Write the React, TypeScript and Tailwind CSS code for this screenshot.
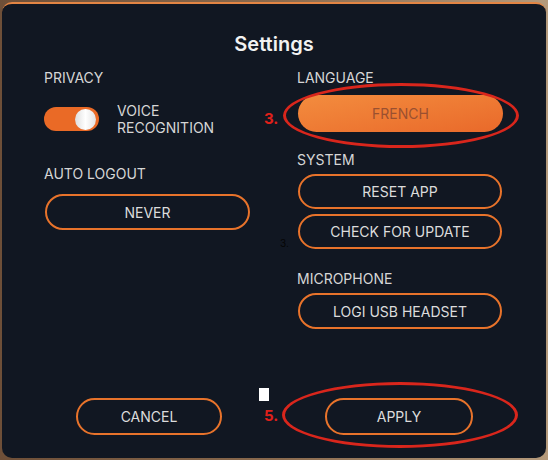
const Pill = ({label, className = ""}: {label: string; className?: string}) => (
    <button
        type="button"
        className={"flex items-center justify-center rounded-full border-2 border-[#e8732b] text-[14px] text-[#dcdcdc] " + className}>
        {label}
    </button>
);

const Label = ({children, className = ""}: {children: string; className?: string}) => (
    <div className={"h-5 text-[14px] leading-5 text-[#d6d6d6] " + className}>{children}</div>
);

const App = () => {
    return (
        <div className="h-[460px] w-[548px] bg-gradient-to-r from-[#6e4f38] via-[#8a6a4e] to-[#b49a7c] p-[2px]"
             style={{fontFamily: "Inter, 'Noto Sans', sans-serif"}}>
            <div className="relative flex h-full flex-col rounded-[10px] border-t-2 border-[#e38544] bg-[#111722]">
                <h1 className="pt-[26px] text-center text-[20px] font-semibold leading-7 text-[#f2f2f2]">
                    Settings
                </h1>

                <div className="mt-[10px] flex pl-[42px]">
                    {/* left column */}
                    <div className="flex w-[206px] flex-col">
                        <Label>PRIVACY</Label>
                        <div className="mt-[14px] flex h-[34px] items-center">
                            <div className="flex h-6 w-[55px] items-center justify-end rounded-full bg-[#ea6a26] pr-[3px]">
                                <div className="h-[21px] w-[21px] rounded-full bg-gradient-to-r from-[#dedede] via-white to-[#e2e2e2]"/>
                            </div>
                            <div className="ml-[18px] text-[14px] leading-[17px] text-[#d6d6d6]">
                                VOICE<br/>RECOGNITION
                            </div>
                        </div>
                        <Label className="mt-[28px]">AUTO LOGOUT</Label>
                        <Pill label="NEVER" className="mt-[10px] ml-[1px] h-9 w-[205px]"/>
                    </div>

                    {/* right column */}
                    <div className="ml-[47px] flex w-[206px] flex-col">
                        <Label>LANGUAGE</Label>
                        <button
                            type="button"
                            className="mt-[7px] ml-[1px] flex h-[37px] w-[205px] items-center justify-center rounded-full bg-gradient-to-br from-[#f38c3e] to-[#e9692a] text-[14px] text-[#9a5030]">
                            FRENCH
                        </button>
                        <Label className="mt-[18px]">SYSTEM</Label>
                        <Pill label="RESET APP" className="mt-[4px] ml-[1px] h-[35px] w-[204px]"/>
                        <Pill label="CHECK FOR UPDATE" className="mt-[5px] ml-[1px] h-[35px] w-[204px]"/>
                        <Label className="mt-[20px]">MICROPHONE</Label>
                        <Pill label="LOGI USB HEADSET" className="mt-[4px] ml-[1px] h-9 w-[204px]"/>
                    </div>
                </div>

                <div className="mt-auto flex pb-[23px] pl-[74px]">
                    <Pill label="CANCEL" className="h-[37px] w-[146px]"/>
                    <Pill label="APPLY" className="ml-[103px] h-[37px] w-[148px]"/>
                </div>

                {/* annotations */}
                <div className="absolute left-[281px] top-[79px] h-[65px] w-[236px] rounded-[50%] border-[3px] border-[#d9261c] blur-[0.4px]"/>
                <div className="absolute left-[280px] top-[378px] h-[66px] w-[236px] rounded-[50%] border-[3px] border-[#d9261c] blur-[0.4px]"/>
                <div className="absolute left-[262px] top-[104px] text-[15px] font-bold text-[#e0201a]">3.</div>
                <div className="absolute left-[262px] top-[401px] text-[15px] font-bold text-[#e0201a]">5.</div>
                <div className="absolute left-[278px] top-[232px] text-[10px] text-[#050505]">3.</div>
                <div className="absolute left-[257px] top-[384px] h-[13px] w-[10px] bg-white"/>
            </div>
        </div>
    );
};

export default App;
